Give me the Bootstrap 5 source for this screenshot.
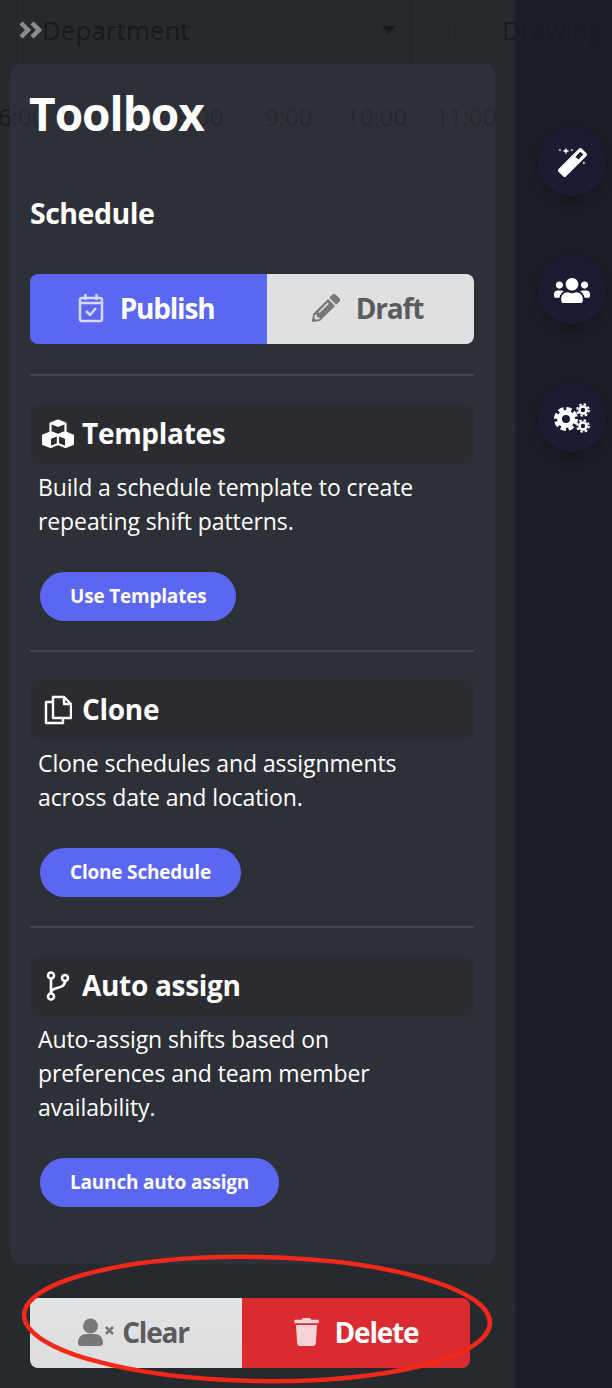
<!DOCTYPE html>
<html lang="en">
<head>
    <meta charset="UTF-8" />
    <title>Toolbox</title>
    <link rel="stylesheet" href="https://cdn.jsdelivr.net/npm/bootstrap@5.3.0/dist/css/bootstrap.min.css" />
    <style>
        html, body { height: 1388px; overflow: hidden; }
        body { background: #1b1e27; font-family: "Open Sans", "Noto Sans", sans-serif; color: #fff; }
        .tool-pane { width: 515px; height: 1388px; background: #26292e; padding: 64px 20px 0 10px; flex: none; }
        .ghost-bar { left: 19px; top: 0; width: 397px; height: 64px; border-left: 1px solid #2a2d32; border-right: 1px solid #2a2d32; color: #18191c; }
        .ghost-dept { left: 22px; top: 10px; font-size: 26px; line-height: 40px; }
        .ghost-caret { left: 362px; top: 26px; width: 0; height: 0; border-left: 7px solid transparent; border-right: 7px solid transparent; border-top: 8px solid #18191c; }
        .ghost-box { left: 452px; top: 14px; width: 31px; height: 33px; border: 1px solid #2a2d32; border-radius: 5px; }
        .ghost-draw { left: 502px; top: 10px; font-size: 26px; line-height: 40px; color: #191b20; }
        .ghost-time { top: 100px; font-size: 24px; line-height: 34px; color: #18191c; }
        .ghost-line { left: 0; width: 515px; height: 1px; background: #2a2d32; }
        .tool-chev { left: 19px; top: 21px; width: 23px; height: 18px; }
        .tool-card { position: relative; width: 485px; height: 1200px; padding: 21px 20px 0; background: rgba(52, 55, 62, .5); border-radius: 10px; }
        .tool-title { font-size: 46px; line-height: 56px; font-weight: 700; margin: 0 0 0 -1px; letter-spacing: -1px; }
        .tool-sub { font-size: 28.5px; line-height: 36px; font-weight: 700; margin: 54px 0 43px; letter-spacing: -.5px; }
        .big-group { height: 70px; width: 444px; }
        .big-group .btn { font-size: 28px; font-weight: 700; border: 0; border-radius: 8px; letter-spacing: -1.2px; padding: 0 6px 3px 0; display: flex; align-items: center; justify-content: center; }
        .big-group .btn svg { flex: none; }
        .big-group .btn-danger-soft { padding-right: 0; }
        .btn-publish, .btn-publish:hover { width: 238px; flex: none !important; background: #5b67f1; color: #fff; border-top-right-radius: 0 !important; border-bottom-right-radius: 0 !important; }
        .btn-light-gray, .btn-light-gray:hover { background: #dfe0e2; color: #5a5b5d; }
        .btn-danger-soft, .btn-danger-soft:hover { background: #d92b30; color: #fff; }
        .tool-rule { margin: 29px 0 28px; border: 0; border-top: 2px solid #45474c; opacity: 1; width: 444px; }
        .tool-rule.first-rule { margin-top: 30px; }
        .tool-head { height: 60px; width: 444px; background: #2b2c31; border-radius: 10px; padding-left: 12px; font-size: 28px; font-weight: 700; letter-spacing: -.3px; margin: 0; }
        .tool-ico { width: 32px; flex: none; margin-right: 8px; display: flex; justify-content: center; }
        .tool-text { font-size: 23px; line-height: 34px; margin: 6px 0 0 8px; letter-spacing: -.1px; }
        .pill-btn, .pill-btn:hover { background: #5b67f1; color: #fff; font-size: 19px; line-height: 25px; font-weight: 700; padding: 12px 30px; margin: 34px 0 0 10px; border: 0; letter-spacing: -.2px; }
        .clear-group { margin: 34px 0 0 20px; width: 440px; height: 70px; }
        .clear-group .btn-light-gray { width: 213px; flex: none !important; border-top-right-radius: 0 !important; border-bottom-right-radius: 0 !important; background: linear-gradient(#e2e3e5, #dcdddf); }
        .rail { padding: 128px 0 0 23px; gap: 60px; }
        .rail-btn { width: 68px; height: 68px; background: #1a1c33; box-shadow: 0 6px 14px rgba(0, 0, 0, .28); }
        .red-ring { left: 0; top: 1240px; width: 612px; height: 148px; pointer-events: none; }
    </style>
</head>
<body class="m-0 d-flex position-relative">

<aside class="tool-pane position-relative">
    <div class="position-absolute ghost-line" style="top:431px"></div>
    <div class="position-absolute ghost-line" style="top:1311px"></div>
    <div class="position-absolute ghost-bar">
        <span class="position-absolute ghost-dept">Department</span>
        <span class="position-absolute ghost-caret"></span>
    </div>
    <span class="position-absolute ghost-box"></span>
    <span class="position-absolute ghost-draw">Drawing</span>
    <span class="position-absolute ghost-time" style="left:-2px">6:00</span>
    <span class="position-absolute ghost-time" style="left:176px">8:00</span>
    <span class="position-absolute ghost-time" style="left:265px">9:00</span>
    <span class="position-absolute ghost-time" style="left:346px">10:00</span>
    <span class="position-absolute ghost-time" style="left:435px">11:00</span>

    <svg class="position-absolute tool-chev" viewBox="0 0 23 18" fill="none" stroke="#8b8c8e" stroke-width="4.500"><path d="M2 2l7 7-7 7M13 2l7 7-7 7"/></svg>

    <section class="tool-card">
        <h1 class="tool-title">Toolbox</h1>
        <h2 class="tool-sub">Schedule</h2>

        <div class="btn-group big-group">
            <button type="button" class="btn btn-publish">
                <svg class="me-3" width="26" height="30" viewBox="0 0 26 30" fill="none" stroke="#d6d9fc" stroke-width="2.500"><rect x="2" y="5" width="22" height="23" rx="2"/><path d="M2 10h22M7.500 1v6M18.500 1v6" /><path d="M8 18l4 4 6-7"/></svg>
                Publish
            </button>
            <button type="button" class="btn btn-light-gray">
                <svg class="me-3" width="28" height="28" viewBox="0 0 512 512" fill="#77787a"><path d="M497.900 142.100l-46.100 46.100c-4.700 4.700-12.300 4.700-17 0l-111-111c-4.700-4.700-4.700-12.300 0-17l46.100-46.100c18.700-18.700 49.100-18.700 67.900 0l60.100 60.100c18.800 18.700 18.800 49.100 0 67.900zM284.200 99.800L21.600 362.400.4 483.900c-2.900 16.400 11.400 30.600 27.800 27.800l121.500-21.300 262.600-262.600c4.700-4.700 4.700-12.300 0-17l-111-111c-4.800-4.700-12.400-4.700-17.100 0zM124.100 339.900c-5.500-5.500-5.500-14.300 0-19.800l154-154c5.500-5.500 14.300-5.500 19.800 0s5.500 14.300 0 19.800l-154 154c-5.500 5.500-14.300 5.500-19.800 0zM88 424h48v36.300l-64.500 11.300-31.100-31.100L51.700 376H88v48z"/></svg>
                Draft
            </button>
        </div>

        <hr class="tool-rule first-rule" />
        <h3 class="tool-head d-flex align-items-center">
            <span class="tool-ico">
                <svg width="32" height="30" viewBox="0 0 32 30" fill="#2b2c31" stroke="#fff" stroke-width="2.200" stroke-linejoin="round"><path d="M16 1.500l7.500 3v8.500l-7.500 3-7.500-3V4.500z"/><path d="M8.500 13.500l7.500 3v8.500l-7.500 3-7.500-3v-8.500z"/><path d="M23.500 13.500l7.500 3v8.500l-7.500 3-7.500-3v-8.500z"/><path fill="#fff" stroke-width="1" d="M8.500 4.500l7.500 3 7.500-3-7.500-3zM1 16.500l7.500 3 7.500-3-7.500-3zM16 16.500l7.500 3 7.500-3-7.500-3zM1 16.500l7.500 3V28l-7.500-3zM23.500 19.500l7.500-3V25l-7.500 3z"/></svg>
            </span>
            Templates
        </h3>
        <p class="tool-text">Build a schedule template to create<br>repeating shift patterns.</p>
        <button type="button" class="btn rounded-pill pill-btn">Use Templates</button>

        <hr class="tool-rule" />
        <h3 class="tool-head d-flex align-items-center">
            <span class="tool-ico">
                <svg width="28" height="30" viewBox="0 0 28 30" fill="none" stroke="#fff" stroke-width="2.400" stroke-linejoin="round"><path d="M9 2h11l7 7v14H9z"/><path d="M20 2v7h7"/><path d="M9 7H2v21h17v-5"/></svg>
            </span>
            Clone
        </h3>
        <p class="tool-text">Clone schedules and assignments<br>across date and location.</p>
        <button type="button" class="btn rounded-pill pill-btn">Clone Schedule</button>

        <hr class="tool-rule" />
        <h3 class="tool-head d-flex align-items-center">
            <span class="tool-ico">
                <svg width="24" height="30" viewBox="0 0 24 30" fill="none" stroke="#fff" stroke-width="2.600"><circle cx="5" cy="4.500" r="3"/><circle cx="5" cy="25.500" r="3"/><circle cx="19" cy="7" r="3"/><path d="M5 7.500v15M19 10c0 5-4 6-8 7-3 .7-6 2-6 5"/></svg>
            </span>
            Auto assign
        </h3>
        <p class="tool-text">Auto-assign shifts based on<br>preferences and team member<br>availability.</p>
        <button type="button" class="btn rounded-pill pill-btn">Launch auto assign</button>
    </section>

    <div class="btn-group big-group clear-group">
        <button type="button" class="btn btn-light-gray">
            <svg class="me-2" width="36" height="28" viewBox="0 0 36 28" fill="#77787a"><circle cx="12.500" cy="8" r="7.500"/><path d="M0 25c0-6 4-9 8-9h9c4 0 8 3 8 9 0 2-1 3-3 3H3c-2 0-3-1-3-3z"/><path d="M28 9l7 7m0-7l-7 7" stroke="#77787a" stroke-width="2.600" fill="none"/></svg>
            Clear
        </button>
        <button type="button" class="btn btn-danger-soft">
            <svg class="me-3" width="25" height="28" viewBox="0 0 448 512" fill="#f6d3d4"><path d="M432 32H312l-9.400-18.700A24 24 0 0 0 281.100 0H166.800a23.720 23.720 0 0 0-21.400 13.300L136 32H16A16 16 0 0 0 0 48v32a16 16 0 0 0 16 16h416a16 16 0 0 0 16-16V48a16 16 0 0 0-16-16zM53.200 467a48 48 0 0 0 47.900 45h245.800a48 48 0 0 0 47.900-45L416 128H32z"/></svg>
            Delete
        </button>
    </div>
</aside>

<nav class="rail d-flex flex-column">
    <a class="rail-btn rounded-circle d-flex align-items-center justify-content-center">
        <svg width="29" height="29" viewBox="0 0 512 512" fill="#fff"><path d="M140 -10l16 46 46 17-46 17-16 46-16-46-46-17 46-17zM35 12l8 16 16 8-16 8-8 16-8-16-16-8 16-8zM246 12l8 16 16 8-16 8-8 16-8-16-16-8 16-8zM458 236l8 20 20 8-20 8-8 20-8-20-20-8 20-8z"/><path d="M502.620 94.230L417.770 9.380C411.530 3.120 403.340 0 395.150 0c-8.190 0-16.380 3.120-22.630 9.380L9.380 372.520c-12.500 12.500-12.500 32.760 0 45.250l84.850 84.850c6.250 6.250 14.440 9.370 22.620 9.370 8.190 0 16.380-3.120 22.630-9.370l363.140-363.150c12.500-12.480 12.500-32.750 0-45.240zM359.450 203.460l-50.910-50.910 86.600-86.600 50.910 50.910-86.600 86.600z"/></svg>
    </a>
    <a class="rail-btn rounded-circle d-flex align-items-center justify-content-center">
        <svg width="36" height="29" viewBox="0 0 640 512" fill="#fff"><path d="M96 224c35.300 0 64-28.700 64-64s-28.700-64-64-64-64 28.700-64 64 28.700 64 64 64zm448 0c35.300 0 64-28.700 64-64s-28.700-64-64-64-64 28.700-64 64 28.700 64 64 64zm32 32h-64c-17.600 0-33.500 7.100-45.100 18.600 40.300 22.100 68.900 62 75.100 109.400h66c17.700 0 32-14.300 32-32v-32c0-35.300-28.700-64-64-64zm-256 0c61.900 0 112-50.100 112-112S381.900 32 320 32 208 82.100 208 144s50.100 112 112 112zm76.800 32h-8.300c-20.800 10-43.900 16-68.500 16s-47.600-6-68.500-16h-8.300C179.600 288 128 339.600 128 403.200V432c0 26.500 21.500 48 48 48h288c26.500 0 48-21.500 48-48v-28.800c0-63.600-51.600-115.200-115.200-115.200zm-223.700-13.400C161.500 263.100 145.600 256 128 256H64c-35.300 0-64 28.700-64 64v32c0 17.700 14.300 32 32 32h65.900c6.300-47.400 34.900-87.300 75.200-109.400z"/></svg>
    </a>
    <a class="rail-btn rounded-circle d-flex align-items-center justify-content-center">
        <svg width="36" height="30" viewBox="0 0 36 30" fill="none" stroke="#fff">
            <circle cx="12" cy="16" r="6.500" stroke-width="5"/>
            <circle cx="12" cy="16" r="10" stroke-width="4" stroke-dasharray="5.200 2.650"/>
            <circle cx="29" cy="7" r="3.500" stroke-width="2.600"/>
            <circle cx="29" cy="7" r="5.800" stroke-width="2" stroke-dasharray="2.500 2.050"/>
            <circle cx="29" cy="23" r="3.500" stroke-width="2.600"/>
            <circle cx="29" cy="23" r="5.800" stroke-width="2" stroke-dasharray="2.500 2.050"/>
        </svg>
    </a>
</nav>

<svg class="position-absolute red-ring" viewBox="0 0 612 148" fill="none"><ellipse cx="257" cy="79" rx="233" ry="62" transform="rotate(1 257 79)" stroke="#f2281b" stroke-width="4.500"/></svg>

</body>
</html>
